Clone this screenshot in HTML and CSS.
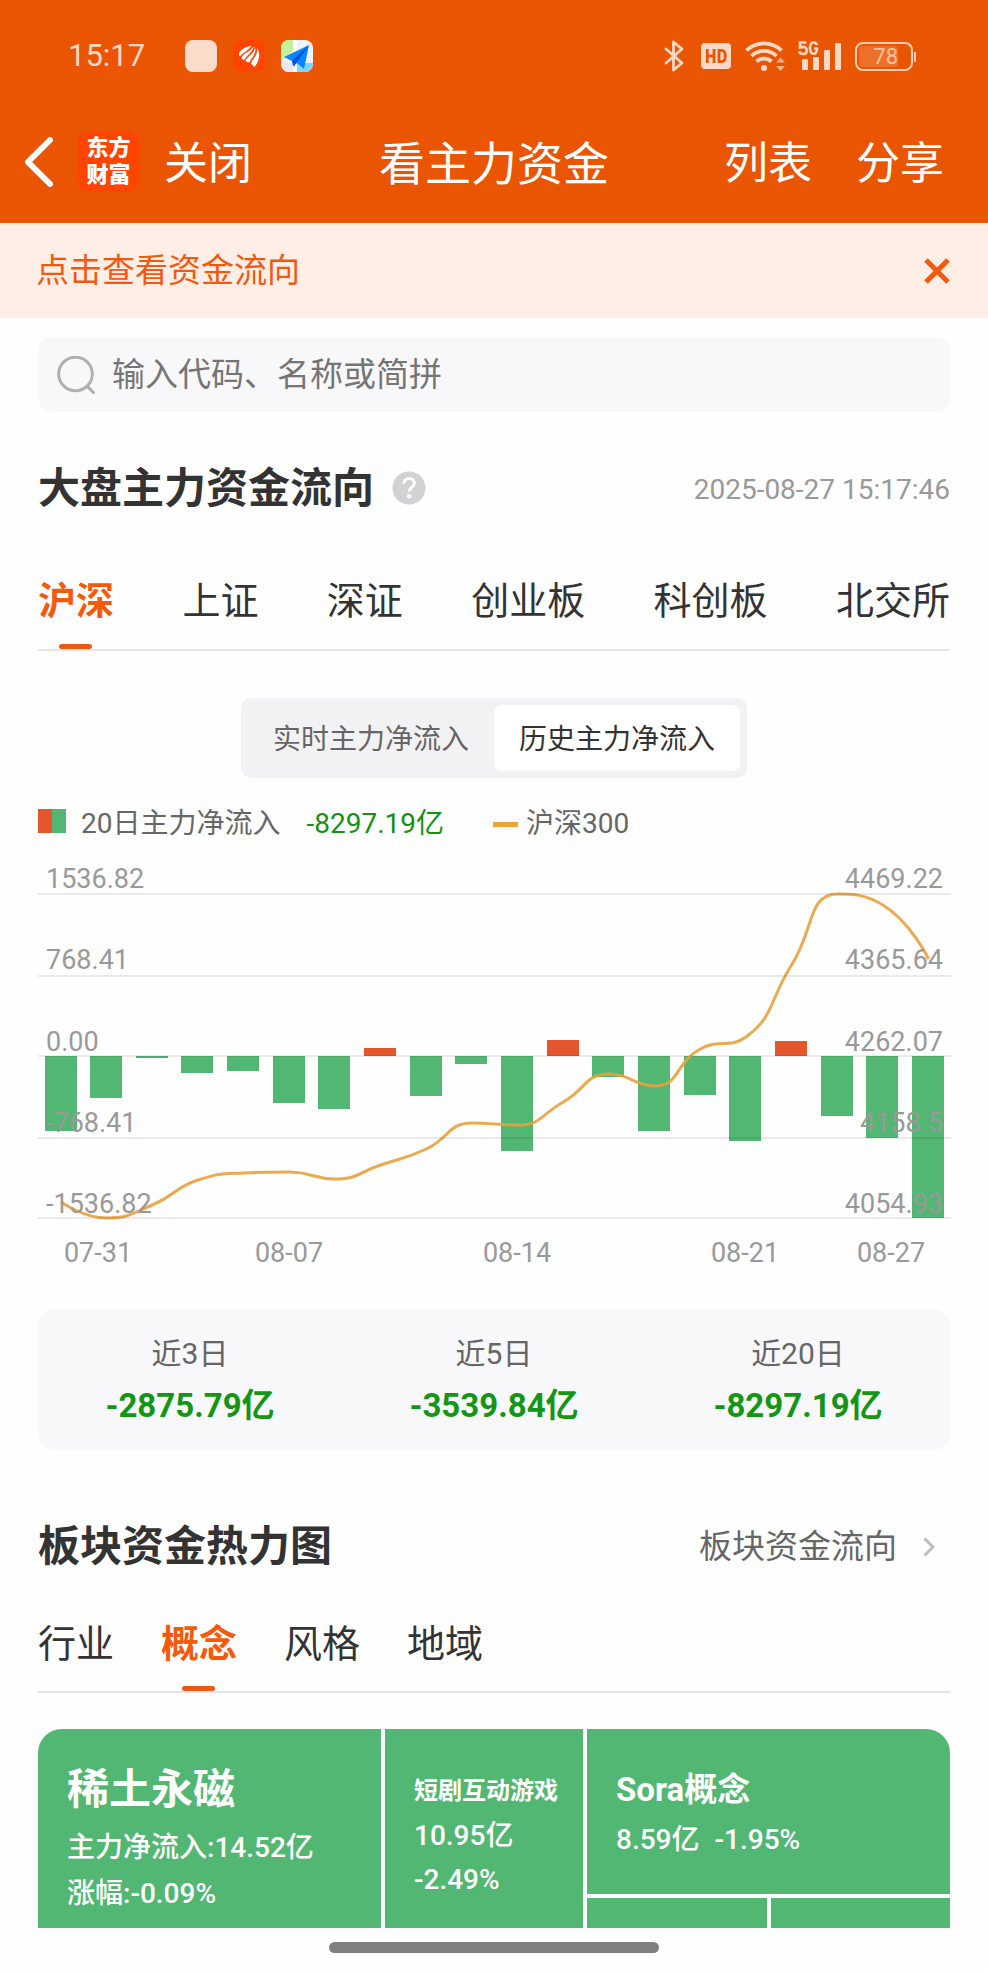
FILE: index.html
```html
<!DOCTYPE html>
<html lang="zh-CN">
<head>
<meta charset="utf-8">
<meta name="viewport" content="width=device-width, initial-scale=1">
<title>看主力资金</title>
<link rel="stylesheet" href="styles.css">
</head>
<body>
<header class="top">
  <div class="status">
    <span class="status-time">15:17</span>
    <div class="status-apps">
      <svg width="32" height="32" viewBox="0 0 32 32"><rect width="32" height="32" rx="8" fill="#fbdccb"/></svg>
      <svg width="32" height="32" viewBox="0 0 32 32"><rect width="32" height="32" rx="8" fill="#ff4500"/><g fill="#fff"><path d="M18.500 6C12 6.500 7 10 6 13.500c-.2 1.200.2 2.200.9 3C10 12.500 14.500 11 18.500 6z"/><path d="M20.500 6.500C17 12 10 13 8.500 18c.6 1.300 1.500 1.800 2.800 2C13 15.500 19.500 13 20.500 6.500z"/><path d="M22 6.500c0 7.500-7.500 9-9.500 14.500 1.300 1 2.500 1.300 4 1.200C18 18 24 14 22 6.500z"/><path d="M23.800 7.500C26 14 19.500 18.500 18 23.500l3.500 3.500C26.500 21 28 13 23.800 7.500z"/></g></svg>
      <svg width="32" height="32" viewBox="0 0 32 32"><defs><clipPath id="map-clip"><rect width="32" height="32" rx="8"/></clipPath></defs><g clip-path="url(#map-clip)"><rect width="32" height="32" fill="#f1f3f7"/><path d="M0 0h12v11L0 21z" fill="#c4f29a"/><path d="M12 0h4v32h-4z" fill="#fff"/><path d="M16 23h16v9H16z" fill="#7fd4fb"/><path d="M0 20l12 4v8H0z" fill="#e4e8f3"/><path d="M28 5L3 17l8 4 1 5 4-3 7 6z" fill="#0a84ff"/><path d="M28 5L11 21l2 6 2-4z" fill="#0550d8"/></g></svg>
    </div>
    <div class="status-icons">
      <svg width="20" height="32" viewBox="0 0 20 32" fill="none" stroke="#fbd9c6" stroke-width="2.800" stroke-linejoin="round" stroke-linecap="round"><path d="M2 9l16 14-8.500 7V2L18 9 2 23"/></svg>
      <svg class="icon-hd" width="30" height="28" viewBox="0 0 30 28"><rect y="1" width="30" height="26" rx="4" fill="#fbd9c6"/><path d="M6.300 7v14M13 7v14M6 14h7M18 8.300h2.300c3 0 4 2 4 5.700s-1 5.700-4 5.700H18z" fill="none" stroke="#ea5504" stroke-width="2.800"/></svg>
      <svg class="icon-wifi" width="42" height="32" viewBox="0 0 42 32"><g fill="none" stroke="#fbd9c6" stroke-width="3.800"><path d="M1.500 10.500a25 25 0 0 1 35 0"/><path d="M6.500 16a18 18 0 0 1 25 0"/><path d="M11.500 21.500a11 11 0 0 1 15 0"/></g><circle cx="19" cy="28" r="3" fill="#fbd9c6"/><path d="M31 22.500l4.500-5 4.500 5zM31 26h9l-4.500 5z" fill="#fbb48c"/></svg>
      <svg class="icon-signal" width="43" height="32" viewBox="0 0 43 32"><g fill="#fbd9c6"><rect x="4" y="19" width="6" height="11" rx="1"/><rect x="15" y="17" width="6" height="13" rx="1"/><rect x="26" y="10" width="6" height="20" rx="1"/><rect x="37" y="3" width="6" height="27" rx="1"/></g><path d="M8.500 2.500H2v5c5-1.500 6.800 0 6.800 3s-1.800 3.500-3.500 3.500S1.500 13 1 11.500M19 5c-.8-2-2-2.500-3.300-2.500-2.700 0-3.700 2-3.700 5.500s1 5.800 3.700 5.800c2 0 3.300-1 3.300-5.300h-3" fill="none" stroke="#fbd9c6" stroke-width="2.600"/></svg>
      <div class="battery"><span class="battery-level">78</span></div>
    </div>
  </div>
  <nav class="nav">
    <div class="nav-left">
      <button class="plain" aria-label="返回"><svg width="28" height="50" viewBox="0 0 28 50" fill="none" stroke="#fff" stroke-width="6" stroke-linecap="round"><path d="M25 3L3 25l22 22"/></svg></button>
      <a class="logo" href="#">东方<br>财富</a>
      <button class="plain nav-text">关闭</button>
    </div>
    <h1 class="nav-title">看主力资金</h1>
    <div class="nav-right">
      <button class="plain nav-text">列表</button>
      <button class="plain nav-text">分享</button>
    </div>
  </nav>
</header>

<div class="notice">
  <a class="notice-link" href="#">点击查看资金流向</a>
  <button class="plain" aria-label="关闭提示"><svg width="26" height="26" viewBox="0 0 26 26" stroke="#f4590c" stroke-width="5"><path d="M2 2l22 22M24 2L2 24"/></svg></button>
</div>

<main class="page">
  <label class="search">
    <svg width="38" height="38" viewBox="0 0 38 38" fill="none" stroke="#b0b0b0" stroke-width="3"><circle cx="18.500" cy="18" r="16.800"/><path d="M30.500 30.500l7 7"/></svg>
    <input class="search-input" type="text" placeholder="输入代码、名称或简拼" aria-label="搜索">
  </label>

  <section>
    <div class="head">
      <h2 class="head-title">大盘主力资金流向</h2>
      <button class="plain help" aria-label="说明"><svg width="34" height="34" viewBox="0 0 34 34"><circle cx="17" cy="17" r="16.500" fill="#d2d2d4"/><path d="M11.800 12.800c0-3.300 2.200-5.300 5.300-5.300s5.200 1.900 5.200 4.700c0 4-5 4.300-5 8.300" fill="none" stroke="#fff" stroke-width="3"/><circle cx="17.200" cy="25.200" r="2.300" fill="#fff"/></svg></button>
      <time class="head-time">2025-08-27 15:17:46</time>
    </div>
    <div class="tabs tabs-wide" role="tablist">
      <button class="tab tab-on" role="tab" aria-selected="true">沪深</button>
      <button class="tab" role="tab">上证</button>
      <button class="tab" role="tab">深证</button>
      <button class="tab" role="tab">创业板</button>
      <button class="tab" role="tab">科创板</button>
      <button class="tab" role="tab">北交所</button>
    </div>

    <div class="segment">
      <button class="segment-item">实时主力净流入</button>
      <button class="segment-item segment-on">历史主力净流入</button>
    </div>

    <div class="legend">
      <span class="legend-box"></span>
      <span class="legend-name">20日主力净流入</span>
      <span class="legend-value">-8297.19亿</span>
      <span class="legend-line"></span>
      <span>沪深300</span>
    </div>

    <svg class="chart" viewBox="0 0 912 416" role="img" aria-label="主力净流入与沪深300">
      <g id="bars"></g>
      <path id="index-line" class="chart-line"/>
      <path class="chart-grid" d="M0 34H913M0 116H913M0 196H913M0 278H913M0 358H913"/>
      <g class="chart-label">
        <text x="8" y="28">1536.82</text>
        <text x="8" y="109">768.41</text>
        <text x="8" y="191">0.00</text>
        <text x="8" y="272">-768.41</text>
        <text x="8" y="353">-1536.82</text>
      </g>
      <g class="chart-label chart-label-end">
        <text x="905" y="28">4469.22</text>
        <text x="905" y="109">4365.64</text>
        <text x="905" y="191">4262.07</text>
        <text x="905" y="272">4158.5</text>
        <text x="905" y="353">4054.93</text>
      </g>
      <g class="chart-label chart-label-mid">
        <text x="60" y="402">07-31</text>
        <text x="251" y="402">08-07</text>
        <text x="479" y="402">08-14</text>
        <text x="707" y="402">08-21</text>
        <text x="853" y="402">08-27</text>
      </g>
    </svg>

    <dl class="totals">
      <div class="total"><dt class="total-name">近3日</dt><dd class="total-value">-2875.79亿</dd></div>
      <div class="total"><dt class="total-name">近5日</dt><dd class="total-value">-3539.84亿</dd></div>
      <div class="total"><dt class="total-name">近20日</dt><dd class="total-value">-8297.19亿</dd></div>
    </dl>
  </section>

  <section class="sector">
    <div class="head">
      <h2 class="head-title">板块资金热力图</h2>
      <a class="head-link" href="#">板块资金流向
        <svg width="12" height="20" viewBox="0 0 12 20" fill="none" stroke="#bdbdbd" stroke-width="3"><path d="M1.500 1.500L10 10l-8.500 8.500"/></svg>
      </a>
    </div>
    <div class="tabs tabs-left" role="tablist">
      <button class="tab" role="tab">行业</button>
      <button class="tab tab-on" role="tab" aria-selected="true">概念</button>
      <button class="tab" role="tab">风格</button>
      <button class="tab" role="tab">地域</button>
    </div>

    <div class="heat">
      <div class="cell cell-first">
        <h3 class="cell-name">稀土永磁</h3>
        <p>主力净流入:14.52亿</p>
        <p>涨幅:-0.09%</p>
      </div>
      <div class="cell cell-second">
        <h3 class="cell-name">短剧互动游戏</h3>
        <p>10.95亿</p>
        <p>-2.49%</p>
      </div>
      <div class="heat-rest">
        <div class="cell cell-third">
          <h3 class="cell-name">Sora概念</h3>
          <p class="cell-pair"><span>8.59亿</span><span>-1.95%</span></p>
        </div>
        <div class="cell cell-blank"></div>
        <div class="cell cell-blank"></div>
      </div>
    </div>
  </section>
</main>
<div class="home-bar"></div>
<script src="chart.js"></script>
</body>
</html>
```
FILE: styles.css
```css
* { box-sizing: border-box; }

body {
  margin: 0;
  background: #fefefe;
  color: #333;
  font: 28px/40px Roboto, "Noto Sans CJK SC", sans-serif;
}

h1, h2, h3, p, dl, dd { margin: 0; }

button {
  font: inherit;
  color: inherit;
  border: 0;
  padding: 0;
  background: none;
  white-space: nowrap;
}

a { color: inherit; text-decoration: none; }
svg { display: block; flex: none; }

.plain { display: block; }

/* header */
.top { background: #ea5504; color: #fff; padding-bottom: 12px; }

.status {
  display: flex;
  align-items: center;
  height: 112px;
  padding: 0 72px 0 68px;
}

.status-time { font-size: 31px; color: #fbd9c6; }
.status-apps { display: flex; gap: 16px; margin-left: 40px; }
.status-icons { display: flex; align-items: center; margin-left: auto; }
.icon-hd { margin-left: 17px; }
.icon-wifi { margin-left: 14px; }
.icon-signal { margin-left: 11px; }

.battery {
  position: relative;
  width: 58px;
  height: 29px;
  margin: 0 3px 0 14px;
  padding: 2px;
  border: 2px solid #fbd0b6;
  border-radius: 8px;
}

.battery::after {
  content: "";
  position: absolute;
  right: -5px;
  top: 8px;
  width: 2px;
  height: 10px;
  background: #fbd0b6;
}

.battery-level {
  display: block;
  width: 39px;
  border-radius: 4px;
  background: #ee6f2a;
  color: #fbc3a2;
  font-size: 22px;
  line-height: 21px;
  text-align: right;
}

.nav {
  display: grid;
  grid-template-columns: 1fr auto 1fr;
  align-items: center;
  height: 99px;
  padding: 0 25px;
}

.nav-left { display: flex; align-items: center; gap: 25px; }
.nav-right { display: flex; justify-content: flex-end; gap: 44px; padding-right: 19px; }
.nav-text { padding-top: 4px; font-size: 44px; line-height: 60px; }
.nav-title { padding-top: 4px; font-size: 46px; line-height: 60px; font-weight: 400; }

.logo {
  display: block;
  width: 61px;
  height: 61px;
  padding-top: 3px;
  border-radius: 12px;
  background: #ff4500;
  font-size: 22px;
  line-height: 27px;
  font-weight: 900;
  text-align: center;
}

.notice {
  display: flex;
  align-items: center;
  justify-content: space-between;
  height: 95px;
  padding: 0 38px 0 36px;
  background: #ffeee6;
  color: #f05a10;
  font-size: 33px;
}

/* content */
.page { padding: 19px 38px 0; }

.search {
  display: flex;
  align-items: center;
  gap: 17px;
  height: 75px;
  padding: 0 19px;
  border-radius: 14px;
  background: #f8f8fa;
}

.search-input {
  flex: 1;
  min-width: 0;
  padding: 0;
  border: 0;
  outline: 0;
  background: none;
  color: #333;
  font: inherit;
  font-size: 33px;
}

.search-input::placeholder { color: #757575; opacity: 1; }

.head { display: flex; align-items: center; height: 60px; margin-top: 46px; }
.head-title { padding-top: 2px; font-size: 42px; line-height: 60px; font-weight: 700; }
.help { margin-left: 18px; }
.head-time { margin-left: auto; padding-top: 4px; color: #999; }

.head-link {
  display: flex;
  align-items: center;
  gap: 26px;
  margin-left: auto;
  padding: 2px 15px 0 0;
  color: #666;
  font-size: 33px;
}

.tabs { display: flex; border-bottom: 2px solid #e5e5e5; }
.tabs-wide { justify-content: space-between; margin-top: 58px; }
.tabs-left { gap: 47px; margin-top: 43px; }

.tab {
  position: relative;
  padding-bottom: 23px;
  font-size: 38px;
  line-height: 50px;
}

.tabs-left .tab { padding-bottom: 22px; }

.tab-on { color: #f5590a; font-weight: 700; }

.tab-on::after {
  content: "";
  position: absolute;
  left: 50%;
  bottom: 0;
  width: 33px;
  height: 5px;
  margin-left: -17px;
  border-radius: 3px;
  background: #ea5a14;
}

.segment {
  display: flex;
  width: max-content;
  margin: 47px auto 0;
  padding: 7px;
  border-radius: 10px;
  background: #f2f2f4;
  color: #666;
}

.segment-item { padding: 4px 25px 0; line-height: 62px; border-radius: 7px; }
.segment-on { background: #fff; color: #333; }

.legend { display: flex; align-items: center; margin-top: 26px; color: #666; }

.legend-box {
  width: 28px;
  height: 24px;
  margin: 0 15px 6px 0;
  background: linear-gradient(90deg, #e5562d 50%, #52b772 50%);
}

.legend-value { margin-left: 26px; color: #139113; }
.legend-line { width: 25px; height: 5px; margin: 0 8px 0 49px; background: #eda338; }

.chart { width: 100%; height: auto; margin-top: 16px; overflow: visible; }
.chart-grid { fill: none; stroke: #000; stroke-opacity: .08; stroke-width: 2; }
.chart-line { fill: none; stroke: #e8a23c; stroke-opacity: .9; stroke-width: 3; }
.chart-label { fill: #999; font-size: 27px; }
.chart-label-end { text-anchor: end; }
.chart-label-mid { text-anchor: middle; }
.bar-down { fill: #52b772; }
.bar-up { fill: #e5562d; }

.totals {
  display: grid;
  grid-template-columns: repeat(3, 1fr);
  margin-top: 33px;
  padding: 25px 0 24px;
  border-radius: 16px;
  background: #f8f8fa;
  text-align: center;
}

.total-name { color: #666; font-size: 30px; }
.total-value { margin-top: 12px; color: #139613; font-size: 33px; font-weight: 700; }

.sector .head { margin-top: 66px; }

/* heat map */
.heat {
  display: grid;
  grid-template-columns: 343fr 198fr 363fr;
  gap: 4px;
  margin-top: 36px;
  border-radius: 24px 24px 0 0;
  overflow: hidden;
  color: #fff;
  font-weight: 500;
}

.heat-rest {
  display: grid;
  grid-template-columns: 1fr 1fr;
  grid-template-rows: auto 1fr;
  gap: 4px;
}

.cell { padding-left: 29px; background: #52b772; white-space: nowrap; }
.cell-name { font-weight: 700; }

.cell-first { padding-top: 31px; padding-bottom: 11px; line-height: 46px; }
.cell-first .cell-name { margin-bottom: 5px; font-size: 42px; line-height: 60px; }
.cell-second { padding-top: 39px; line-height: 44px; }
.cell-second .cell-name { font-size: 24px; line-height: 46px; }
.cell-third { grid-column: 1 / 3; padding-top: 36px; padding-bottom: 29px; line-height: 50px; }
.cell-third .cell-name { font-size: 33px; line-height: 50px; }
.cell-pair { display: flex; gap: 15px; }

.home-bar {
  width: 33.4%;
  height: 11px;
  margin: 14px auto 19px;
  border-radius: 6px;
  background: #808080;
}
```
FILE: chart.js
```js
const ZERO = 196;
const STEP = 45.66;
const FIRST = 23;
const flows = [-75, -42, -2, -17, -15, -47, -53, 8, -40, -8, -95, 16, -21, -75, -39, -85, 15, -60, -82, -162];
const index = [342, 358, 345, 320, 313, 312, 319, 305, 289, 263, 265, 242, 214, 226, 189, 177, 105, 34, 45, 99];

const svgNs = "http://www.w3.org/2000/svg";
const bars = document.getElementById("bars");
flows.forEach((v, i) => {
  const r = document.createElementNS(svgNs, "rect");
  r.setAttribute("x", Math.floor(FIRST + STEP * i - 16));
  r.setAttribute("y", v > 0 ? ZERO - v : ZERO);
  r.setAttribute("width", 32);
  r.setAttribute("height", Math.abs(v));
  r.setAttribute("class", v > 0 ? "bar-up" : "bar-down");
  bars.appendChild(r);
});

const pts = index.map((y, i) => [FIRST + STEP * i, y]);
const clamp = (v, a, b) => Math.max(Math.min(v, Math.max(a, b)), Math.min(a, b));

// Smooth curve whose control points never pass their neighbours
let d = `M${pts[0]}`;
let out = pts[0];
for (let i = 1; i < pts.length; i++) {
  const p = pts[i];
  let into = p;
  let next = p;
  if (i < pts.length - 1) {
    const a = pts[i - 1];
    const b = pts[i + 1];
    const lenA = Math.hypot(p[0] - a[0], p[1] - a[1]);
    const lenB = Math.hypot(b[0] - p[0], b[1] - p[1]);
    const k = lenB / (lenA + lenB);
    next = p.map((c, j) => clamp(c + (b[j] - a[j]) * 0.5 * k, c, b[j]));
    into = p.map((c, j) => clamp(c - (next[j] - c) * lenA / lenB, a[j], c));
    next = p.map((c, j) => c + (c - into[j]) * lenB / lenA);
  }
  d += `C${out} ${into} ${p}`;
  out = next;
}
document.getElementById("index-line").setAttribute("d", d);
```
